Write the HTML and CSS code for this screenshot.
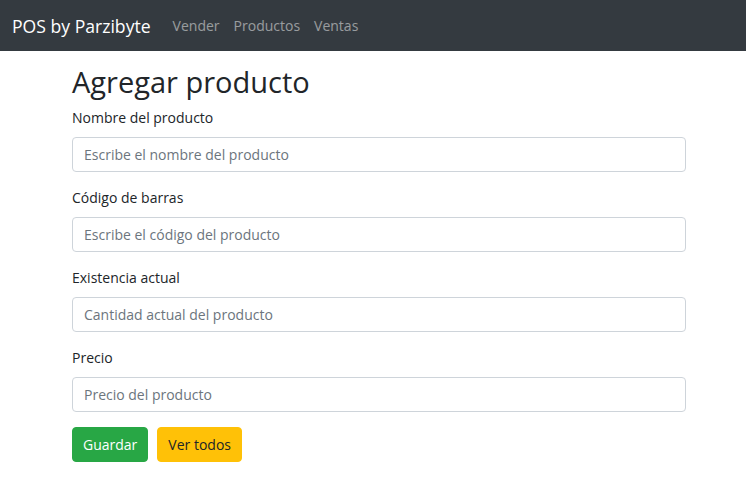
FILE: index.html
```html
<!DOCTYPE html>
<html lang="es">
<head>
<meta charset="utf-8">
<title>POS by Parzibyte</title>
<link rel="stylesheet" href="styles.css">
</head>
<body>
<nav class="navbar">
  <a class="brand" href="#">POS by Parzibyte</a>
  <ul class="nav">
    <li><a href="#">Vender</a></li>
    <li><a href="#">Productos</a></li>
    <li><a href="#">Ventas</a></li>
  </ul>
</nav>
<main class="container">
  <h1 class="title">Agregar producto</h1>
  <form class="form">
    <div class="group">
      <label class="label" for="nombre">Nombre del producto</label>
      <input class="input" id="nombre" type="text" placeholder="Escribe el nombre del producto">
    </div>
    <div class="group">
      <label class="label" for="codigo">Código de barras</label>
      <input class="input" id="codigo" type="text" placeholder="Escribe el código del producto">
    </div>
    <div class="group">
      <label class="label" for="existencia">Existencia actual</label>
      <input class="input" id="existencia" type="text" placeholder="Cantidad actual del producto">
    </div>
    <div class="group">
      <label class="label" for="precio">Precio</label>
      <input class="input" id="precio" type="text" placeholder="Precio del producto">
    </div>
    <div class="actions">
      <button class="btn btn-success" type="button">Guardar</button>
      <a class="btn btn-warning" href="#">Ver todos</a>
    </div>
  </form>
</main>
</body>
</html>
```
FILE: styles.css
```css
* { box-sizing: border-box; }
html, body { margin: 0; padding: 0; }
body {
  font-family: "Open Sans", "Noto Sans", sans-serif;
  font-size: 14px;
  color: #212529;
  background: #fff;
}
.navbar {
  height: 51px;
  background: #343a40;
  display: flex;
  align-items: center;
  padding: 0 12px;
}
.brand {
  color: #fff;
  text-decoration: none;
  font-size: 17.6px;
  margin-right: 15px;
}
.nav {
  display: flex;
  list-style: none;
  margin: 0;
  padding: 0;
}
.nav a {
  display: block;
  padding: 0 7px;
  color: rgba(255,255,255,.5);
  text-decoration: none;
  font-size: 14px;
}
.container {
  width: 614px;
  margin: 0 60px 0 72px;
  padding-top: 13px;
}
.title {
  margin: 0 0 7px;
  font-size: 29px;
  font-weight: 500;
  line-height: 36px;
}
.group { margin-bottom: 15px; }
.label {
  display: block;
  line-height: 22px;
  margin-bottom: 8px;
}
.input {
  display: block;
  width: 100%;
  height: 35px;
  padding: 0 11px;
  border: 1px solid #ced4da;
  border-radius: 4px;
  font-family: inherit;
  font-size: 14px;
  color: #495057;
}
.input::placeholder { color: #6c757d; opacity: 1; }
.actions { display: flex; gap: 9px; }
.btn {
  display: inline-flex;
  align-items: center;
  height: 35px;
  padding: 0 10px;
  border: 1px solid transparent;
  border-radius: 4px;
  font-family: inherit;
  font-size: 14px;
  text-decoration: none;
  cursor: pointer;
}
.btn-success { background: #28a745; border-color: #28a745; color: #fff; }
.btn-warning { background: #ffc107; border-color: #ffc107; color: #212529; }
```
